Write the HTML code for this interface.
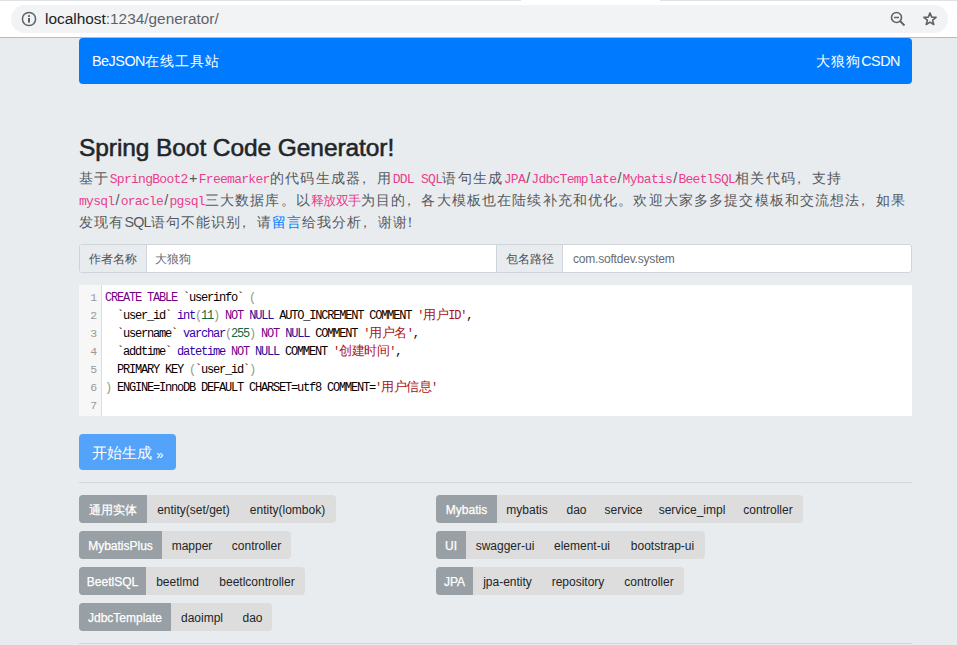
<!DOCTYPE html>
<html><head><meta charset="utf-8">
<style>
*{box-sizing:border-box;margin:0;padding:0}
html,body{width:957px;height:645px;overflow:hidden;background:#e9ecef;font-family:"Liberation Sans",sans-serif;color:#212529;position:relative}
.abs{position:absolute}
#chrome{left:0;top:0;width:957px;height:38px;background:#fff;border-bottom:1px solid #b9b8ba}
#tabline1{left:0;top:0;width:521px;height:1px;background:#dee1e6}
#tabline2{left:660px;top:0;width:297px;height:1px;background:#dee1e6}
#omni{left:11px;top:5px;width:937px;height:28px;border-radius:14px;background:#f1f3f4}
#url{left:45px;top:10px;font-size:15.4px;line-height:18px;color:#202124;white-space:nowrap}
#url span{color:#5f6368}
#nav{left:79px;top:38px;width:833px;height:46px;background:#007bff;border-radius:4px;color:#fff;font-size:14.4px}
#nav .lt{letter-spacing:-0.5px}
#nav .cj{letter-spacing:1px}
#nav .l{position:absolute;left:13px;top:14px;line-height:18px}
#nav .r{position:absolute;right:12px;top:14px;line-height:18px}
#title{left:79px;top:133px;font-size:24.5px;line-height:30px;color:#212529;white-space:nowrap;-webkit-text-stroke:0.55px #212529;letter-spacing:-0.08px}
.dl{left:79px;font-size:14.4px;line-height:22px;color:#55595e;white-space:nowrap;letter-spacing:1px}
.dl i{font-style:normal;letter-spacing:0}
.pl{font-weight:normal;position:relative;left:-4.5px}
code{font-family:"Liberation Mono",monospace;font-size:13px;color:#e83e8c;letter-spacing:-0.72px}
a{color:#007bff;text-decoration:none}
.ig{top:244px;height:29px;border:1px solid #ced4da;border-radius:3px;background:#fff;font-size:12px}
.ig .lab{position:absolute;left:0;top:0;bottom:0;background:#e9ecef;border-right:1px solid #ced4da;color:#495057;line-height:28px;padding-left:9px;font-size:12px}
.ig .val{position:absolute;top:0;line-height:29px;color:#666c72}
#cm{left:79px;top:285px;width:833px;height:131px;background:#fff;font-family:"Liberation Mono",monospace;font-size:12px;letter-spacing:-1.2px}
#gut{left:0;top:0;width:23px;height:131px;background:#f7f7f7;border-right:1px solid #ddd}
.ln{position:absolute;left:0;width:17px;text-align:right;color:#999;line-height:18px;-webkit-text-stroke:0;font-size:11.5px}
.cl{position:absolute;left:26px;line-height:18px;white-space:pre;color:#000}
.kw{color:#708}.nb{color:#219}.num{color:#164}.str{color:#a11}.br{color:#997}.ty{color:#30a}
.cj12{letter-spacing:-0.5px;font-size:13px}
#btn{left:79px;top:434px;width:97px;height:36px;background:#52a3f9;border-radius:4px;color:#fff;font-size:15px;line-height:38px;padding-left:13px}
.hr{left:79px;width:833px;height:1px;background:#d3d6d9}
.tg{position:absolute;height:28px;border-radius:4px;background:#dddddd;font-size:12px;line-height:30px;white-space:nowrap;overflow:hidden}
.tg span{position:absolute;top:0;height:28px;text-align:center;color:#212529}
.tg span.h{left:0;background:#989fa5;color:#fff;-webkit-text-stroke:0.25px #fff}
</style></head><body>
<div id="chrome" class="abs"></div>
<div id="tabline1" class="abs"></div>
<div id="tabline2" class="abs"></div>
<div id="omni" class="abs"></div>
<svg class="abs" style="left:21px;top:11px" width="16" height="16" viewBox="0 0 16 16"><circle cx="8" cy="8" r="6.6" fill="none" stroke="#5f6368" stroke-width="1.5"/><rect x="7.1" y="7" width="1.8" height="4.6" fill="#4a4d51"/><rect x="7.1" y="4.2" width="1.8" height="1.7" fill="#4a4d51"/></svg>
<div id="url" class="abs">localhost<span>:1234/generator/</span></div>
<svg class="abs" style="left:889px;top:10px" width="18" height="18" viewBox="0 0 18 18"><circle cx="7.5" cy="7.5" r="5" fill="none" stroke="#5f6368" stroke-width="1.6"/><line x1="11" y1="11" x2="15.5" y2="15.5" stroke="#5f6368" stroke-width="1.8"/><line x1="5" y1="7.5" x2="10" y2="7.5" stroke="#5f6368" stroke-width="1.5"/></svg>
<svg class="abs" style="left:921px;top:10px" width="18" height="18" viewBox="0 0 18 18"><path d="M9.00 2.90 L10.62 7.08 L15.09 7.32 L11.62 10.15 L12.76 14.48 L9.00 12.05 L5.24 14.48 L6.38 10.15 L2.91 7.32 L7.38 7.08Z" fill="none" stroke="#5f6368" stroke-width="1.6" stroke-linejoin="round"/></svg>

<div id="nav" class="abs"><span class="l"><span class="lt">BeJSON</span><span class="cj">在线工具站</span></span><span class="r"><span class="cj">大狼狗</span><span class="lt">CSDN</span></span></div>

<div id="title" class="abs">Spring Boot Code Generator!</div>
<div class="dl abs" style="top:167px;letter-spacing:1.38px">基于<code>SpringBoot2</code><i style="margin:0 1.35px">+</i><code>Freemarker</code>的代码生成器<b class="pl">，</b>用<code>DDL SQL</code>语句生成<code>JPA</code><i style="margin:0 1.15px">/</i><code>JdbcTemplate</code><i style="margin:0 1.15px">/</i><code>Mybatis</code><i style="margin:0 1.15px">/</i><code>BeetlSQL</code>相关代码<b class="pl">，</b>支持</div>
<div class="dl abs" style="top:189px;letter-spacing:1.14px"><code>mysql</code><i style="margin:0 1.15px">/</i><code>oracle</code><i style="margin:0 1.15px">/</i><code>pgsql</code>三大数据库。以<code style="letter-spacing:-0.5px">释放双手</code>为目的<b class="pl">，</b>各大模板也在陆续补充和优化。欢迎大家多多提交模板和交流想法<b class="pl">，</b>如果</div>
<div class="dl abs" style="top:211px;letter-spacing:1.12px">发现有<i style="letter-spacing:-0.8px">SQL</i>语句不能识别<b class="pl">，</b>请<a>留言</a>给我分析<b class="pl">，</b>谢谢<b class="pl">！</b></div>

<div class="ig abs" style="left:79px;width:418px;border-radius:3px 0 0 3px"><div class="lab" style="width:67px">作者名称</div><div class="val" style="left:75px">大狼狗</div></div>
<div class="ig abs" style="left:496px;width:416px;border-radius:0 3px 3px 0"><div class="lab" style="width:66px">包名路径</div><div class="val" style="left:76px;letter-spacing:-0.2px">com.softdev.system</div></div>

<div id="cm" class="abs">
<div id="gut" class="abs"></div>
<div class="ln" style="top:4px">1</div><div class="ln" style="top:22px">2</div><div class="ln" style="top:40px">3</div><div class="ln" style="top:58px">4</div><div class="ln" style="top:76px">5</div><div class="ln" style="top:94px">6</div><div class="ln" style="top:112px">7</div>
<div class="cl" style="top:4px"><span class="kw">CREATE</span> <span class="kw">TABLE</span> `userinfo` <span class="br">(</span></div>
<div class="cl" style="top:22px">  `user_id` <span class="ty">int</span><span class="br">(</span><span class="num">11</span><span class="br">)</span> <span class="kw">NOT</span> <span class="nb">NULL</span> AUTO_INCREMENT COMMENT <span class="str">'<span class="cj12">用户</span>ID'</span>,</div>
<div class="cl" style="top:40px">  `username` <span class="ty">varchar</span><span class="br">(</span><span class="num">255</span><span class="br">)</span> <span class="kw">NOT</span> <span class="nb">NULL</span> COMMENT <span class="str">'<span class="cj12">用户名</span>'</span>,</div>
<div class="cl" style="top:58px">  `addtime` <span class="ty">datetime</span> <span class="kw">NOT</span> <span class="nb">NULL</span> COMMENT <span class="str">'<span class="cj12">创建时间</span>'</span>,</div>
<div class="cl" style="top:76px">  PRIMARY KEY <span class="br">(</span>`user_id`<span class="br">)</span></div>
<div class="cl" style="top:94px"><span class="br">)</span> ENGINE=InnoDB DEFAULT CHARSET=utf8 COMMENT=<span class="str">'<span class="cj12">用户信息</span>'</span></div>
</div>

<div id="btn" class="abs">开始生成 <span style="font-size:13px;position:relative;top:1px">»</span></div>
<div class="hr abs" style="top:482px"></div>

<div class="tg" style="left:79px;top:495px;width:257px"><span class="h" style="width:68px">通用实体</span><span style="left:68px;width:93px">entity(set/get)</span><span style="left:161px;width:95px">entity(lombok)</span></div>
<div class="tg" style="left:79px;top:531px;width:212px"><span class="h" style="width:83px">MybatisPlus</span><span style="left:83px;width:60px">mapper</span><span style="left:143px;width:69px">controller</span></div>
<div class="tg" style="left:79px;top:567px;width:226px"><span class="h" style="width:67px">BeetlSQL</span><span style="left:67px;width:63px">beetlmd</span><span style="left:130px;width:96px">beetlcontroller</span></div>
<div class="tg" style="left:79px;top:603px;width:193px"><span class="h" style="width:92px">JdbcTemplate</span><span style="left:92px;width:62px">daoimpl</span><span style="left:154px;width:39px">dao</span></div>

<div class="tg" style="left:436px;top:495px;width:367px"><span class="h" style="width:61px">Mybatis</span><span style="left:61px;width:60px">mybatis</span><span style="left:121px;width:39px">dao</span><span style="left:160px;width:55px">service</span><span style="left:215px;width:82px">service_impl</span><span style="left:297px;width:70px">controller</span></div>
<div class="tg" style="left:436px;top:531px;width:269px"><span class="h" style="width:30px">UI</span><span style="left:30px;width:78px">swagger-ui</span><span style="left:108px;width:76px">element-ui</span><span style="left:184px;width:85px">bootstrap-ui</span></div>
<div class="tg" style="left:436px;top:567px;width:248px"><span class="h" style="width:37px">JPA</span><span style="left:37px;width:69px">jpa-entity</span><span style="left:106px;width:72px">repository</span><span style="left:178px;width:70px">controller</span></div>

<div class="hr abs" style="top:643px"></div>
</body></html>
